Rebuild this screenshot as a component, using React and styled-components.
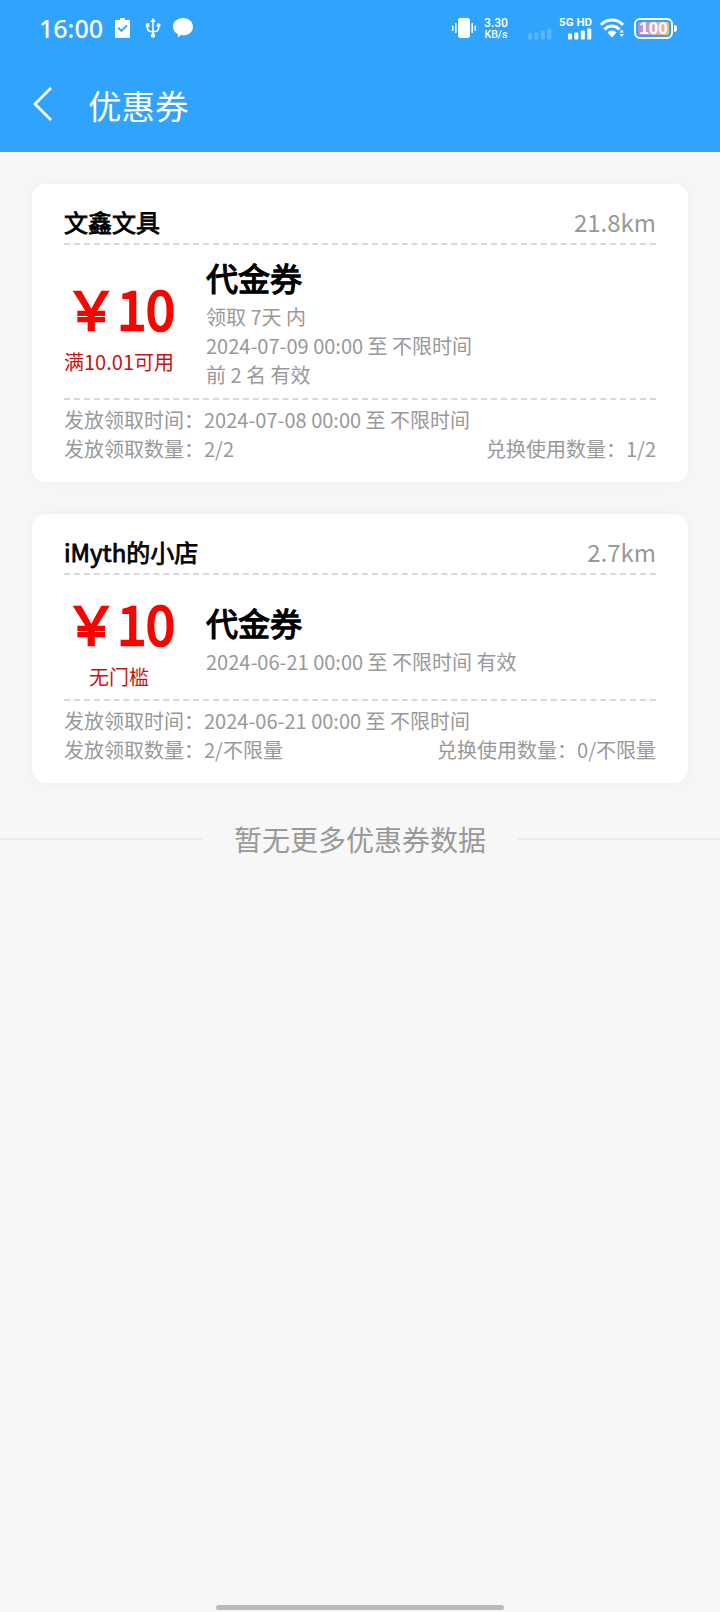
import React from 'react';
import styled, { createGlobalStyle } from 'styled-components';

const GlobalStyle = createGlobalStyle`
  * {
    box-sizing: border-box;
  }
  body {
    margin: 0;
    background: #f7f7f7;
    font-family: 'Noto Sans CJK SC', 'Noto Sans', sans-serif;
  }
`;

const Page = styled.div`
  display: flex;
  flex-direction: column;
  width: 720px;
  height: 1612px;
  background: #f7f7f7;
`;

const Header = styled.header`
  flex: none;
  height: 152px;
  color: #fff;
  background: #30a3fd;
`;

const StatusBar = styled.div`
  display: flex;
  justify-content: space-between;
  height: 56px;
  padding: 0 43px 0 39px;
`;
const StatusGroup = styled.div`
  display: flex;
  align-items: center;
  height: 56px;

  svg {
    display: block;
    flex: none;
  }
`;
const Clock = styled.span`
  width: 76px;
  font: 500 25px/56px 'Noto Sans', sans-serif;
`;
const Icon = styled.svg`
  margin-left: ${({ $left }) => $left || 0}px;
`;
const NetSpeed = styled.div`
  display: flex;
  flex-direction: column;
  align-items: center;
  width: 26px;
  margin-left: 7px;
  font-family: Roboto, sans-serif;
  font-weight: 500;
`;
const SpeedValue = styled.div`
  font-size: 12px;
  line-height: 12px;
`;
const SpeedUnit = styled.div`
  font-size: 10.5px;
  line-height: 11px;
`;
const Network = styled.div`
  display: flex;
  flex-direction: column;
  align-items: flex-end;
  width: 34px;
  height: 23px;
  margin-left: 6px;
`;
const NetworkLabel = styled.span`
  font: 700 11.5px/11px Roboto, sans-serif;
  white-space: nowrap;
`;
const Battery = styled.div`
  display: flex;
  align-items: center;
  margin-left: 10px;
`;
const BatteryBody = styled.div`
  width: 39px;
  height: 21px;
  padding: 2px;
  border: 2px solid #fff;
  border-radius: 6px;
`;
const BatteryLevel = styled.div`
  display: flex;
  justify-content: center;
  height: 100%;
  border-radius: 2px;
  background: linear-gradient(90deg, #b18be0, #d8a5b8 50%, #f0bd77);
  font: 700 17px/13px 'Liberation Sans', sans-serif;
`;
const BatteryTip = styled.div`
  width: 3px;
  height: 7px;
  margin-left: 1px;
  border-radius: 0 3px 3px 0;
  background: #fff;
`;

const NavBar = styled.div`
  display: flex;
  align-items: center;
  height: 96px;
  padding: 0 0 0 32px;
`;
const NavTitle = styled.h1`
  margin: 0 0 0 36px;
  padding-top: 2px;
  font-size: 33.5px;
  font-weight: 400;
  line-height: 48px;
`;

const List = styled.main`
  display: flex;
  flex-direction: column;
  gap: 32px;
  padding: 32px 32px 0;
`;
const Card = styled.section`
  padding: 20px 32px 19px;
  border-radius: 14px;
  background: #fff;
  box-shadow: 0 0 20px rgba(0, 0, 0, 0.04);
`;
const CardHead = styled.div`
  display: flex;
  justify-content: space-between;
  height: 41px;
  border-bottom: 2px dashed #d9d9d9;
  font-size: 24px;
  line-height: 36px;
`;
const ShopName = styled.span`
  color: #000;
  -webkit-text-stroke: 0.8px #000;
`;
const Distance = styled.span`
  color: #999;
`;
const CardBody = styled.div`
  display: flex;
  align-items: center;
  padding: 9px 0 8px;
  border-bottom: 2px dashed #d9d9d9;
`;
const Price = styled.div`
  display: flex;
  flex-direction: column;
  align-items: center;
  width: 110px;
  margin-right: 32px;
  white-space: nowrap;
`;
const Amount = styled.div`
  padding-left: 2px;
  color: #f80400;
  font-size: 52px;
  line-height: 78px;
  -webkit-text-stroke: 2.4px #f80400;
`;
const Condition = styled.div`
  color: #c61414;
  font-size: 20px;
  line-height: 29px;
`;
const Detail = styled.div`
  padding-bottom: 1px;
  color: #999;
  font-size: 20px;
  line-height: 29px;
`;
const CouponName = styled.div`
  padding-bottom: 2px;
  color: #000;
  font-size: 32px;
  line-height: 46px;
  -webkit-text-stroke: 1.3px #000;
`;
const CardFoot = styled.div`
  padding-top: 5px;
  color: #999;
  font-size: 20px;
  line-height: 29px;
`;
const FootRow = styled.div`
  display: flex;
  justify-content: space-between;
`;

const EndTip = styled.div`
  display: flex;
  align-items: center;
  gap: 32px;
  height: 42px;
  margin-top: 35px;
  color: #999;
  font-size: 28px;
  line-height: 42px;

  &::before,
  &::after {
    content: '';
    flex: 1;
    height: 2px;
    background: #ebebeb;
  }
`;

const HomeBar = styled.div`
  width: 288px;
  height: 5px;
  margin: auto auto 2px;
  border-radius: 3px;
  background: #bbb;
`;

const Bars = ({ opacity = 1 }) => (
  <svg width="24" height="12" viewBox="0 0 24 12" fill="#fff" opacity={opacity}>
    <rect x="0" y="5.5" width="4" height="6" rx="1" />
    <rect x="6.3" y="4.5" width="4" height="7" rx="1" />
    <rect x="12.8" y="2.5" width="4" height="9" rx="1" />
    <rect x="19.3" y="0.5" width="4" height="11" rx="1" />
  </svg>
);

const NoSignal = styled.div`
  margin: 11px 0 0 19px;
`;

const coupons = [
  {
    shop: '文鑫文具',
    distance: '21.8km',
    amount: '￥10',
    condition: '满10.01可用',
    name: '代金券',
    lines: ['领取 7天 内', '2024-07-09 00:00 至 不限时间', '前 2 名 有效'],
    time: '2024-07-08 00:00 至 不限时间',
    issued: '2/2',
    used: '1/2',
  },
  {
    shop: 'iMyth的小店',
    distance: '2.7km',
    amount: '￥10',
    condition: '无门槛',
    name: '代金券',
    lines: ['2024-06-21 00:00 至 不限时间 有效'],
    time: '2024-06-21 00:00 至 不限时间',
    issued: '2/不限量',
    used: '0/不限量',
  },
];

const Coupon = ({ shop, distance, amount, condition, name, lines, time, issued, used }) => (
  <Card>
    <CardHead>
      <ShopName>{shop}</ShopName>
      <Distance>{distance}</Distance>
    </CardHead>
    <CardBody>
      <Price>
        <Amount>{amount}</Amount>
        <Condition>{condition}</Condition>
      </Price>
      <Detail>
        <CouponName>{name}</CouponName>
        {lines.map(line => <div key={line}>{line}</div>)}
      </Detail>
    </CardBody>
    <CardFoot>
      <div>发放领取时间：{time}</div>
      <FootRow>
        <span>发放领取数量：{issued}</span>
        <span>兑换使用数量：{used}</span>
      </FootRow>
    </CardFoot>
  </Card>
);

const App = () => (
  <Page>
    <GlobalStyle />
    <Header>
      <StatusBar>
        <StatusGroup>
          <Clock>16:00</Clock>
          <Icon width="15" height="20" viewBox="0 0 15 20">
            <path d="M5 0h5v2h4a1 1 0 0 1 1 1v16a1 1 0 0 1-1 1H1a1 1 0 0 1-1-1V3a1 1 0 0 1 1-1h4z" fill="#fff" />
            <path d="M3 9.5l3.4 3.5L12 7.5" fill="none" stroke="#30a3fd" strokeWidth="1.8" />
          </Icon>
          <Icon $left={15} width="16" height="20" viewBox="0 0 16 20" fill="none" stroke="#fff" strokeWidth="1.6">
            <path d="M8 3v14M2.5 8v2.5c0 2 2 3.3 5.5 3.3s5.5-1.3 5.5-3.3V8" />
            <path d="M8 0l2.8 4H5.2z" fill="#fff" stroke="none" />
            <rect x="0.8" y="5.5" width="3.6" height="3.6" fill="#fff" stroke="none" />
            <circle cx="13.5" cy="7.3" r="2" fill="#fff" stroke="none" />
            <circle cx="8" cy="17.6" r="2.2" fill="#fff" stroke="none" />
          </Icon>
          <Icon $left={12} width="20" height="20" viewBox="0 0 20 20" fill="#fff">
            <path d="M10 0c5.6 0 10 3.7 10 8.7s-4.4 8.6-10 8.6c-.8 0-1.5-.1-2.2-.2L4.8 19.5v-3.6C1.9 14.4 0 11.8 0 8.7 0 3.7 4.4 0 10 0z" />
          </Icon>
        </StatusGroup>
        <StatusGroup>
          <Icon width="24" height="20" viewBox="0 0 24 20" fill="#fff">
            <rect x="6" y="0" width="12" height="20" rx="2.5" />
            <rect x="3" y="5" width="1.6" height="10" rx=".8" />
            <rect x="19.4" y="5" width="1.6" height="10" rx=".8" />
            <rect x="0" y="7.5" width="1.5" height="5.5" rx=".7" />
            <rect x="22.5" y="7.5" width="1.5" height="5.5" rx=".7" />
          </Icon>
          <NetSpeed>
            <SpeedValue>3.30</SpeedValue>
            <SpeedUnit>KB/s</SpeedUnit>
          </NetSpeed>
          <NoSignal>
            <Bars opacity={0.2} />
          </NoSignal>
          <Network>
            <NetworkLabel>5G HD</NetworkLabel>
            <Bars />
          </Network>
          <Icon $left={8} width="24" height="20" viewBox="0 0 24 20" fill="none" stroke="#fff" strokeWidth="3">
            <path d="M1 6.8C7 .3 17 .3 23 6.8M4.5 11.5c4.3-4.6 10.7-4.6 15 0" />
            <path d="M7.5 14.5c2.7-2.6 6.3-2.6 9 0L12 19.5z" fill="#fff" stroke="none" />
            <path d="M21.7 11.5l2.2 3h-4.4zM21.7 19l2.2-3h-4.4z" fill="#fff" stroke="none" />
          </Icon>
          <Battery>
            <BatteryBody>
              <BatteryLevel>100</BatteryLevel>
            </BatteryBody>
            <BatteryTip />
          </Battery>
        </StatusGroup>
      </StatusBar>
      <NavBar>
        <svg width="20" height="34" viewBox="0 0 20 34" fill="none" stroke="#fff" strokeWidth="2.8">
          <path d="M19 1L3 17l16 16" />
        </svg>
        <NavTitle>优惠券</NavTitle>
      </NavBar>
    </Header>
    <List>
      {coupons.map(coupon => <Coupon key={coupon.shop} {...coupon} />)}
    </List>
    <EndTip>暂无更多优惠券数据</EndTip>
    <HomeBar />
  </Page>
);

export default App;
